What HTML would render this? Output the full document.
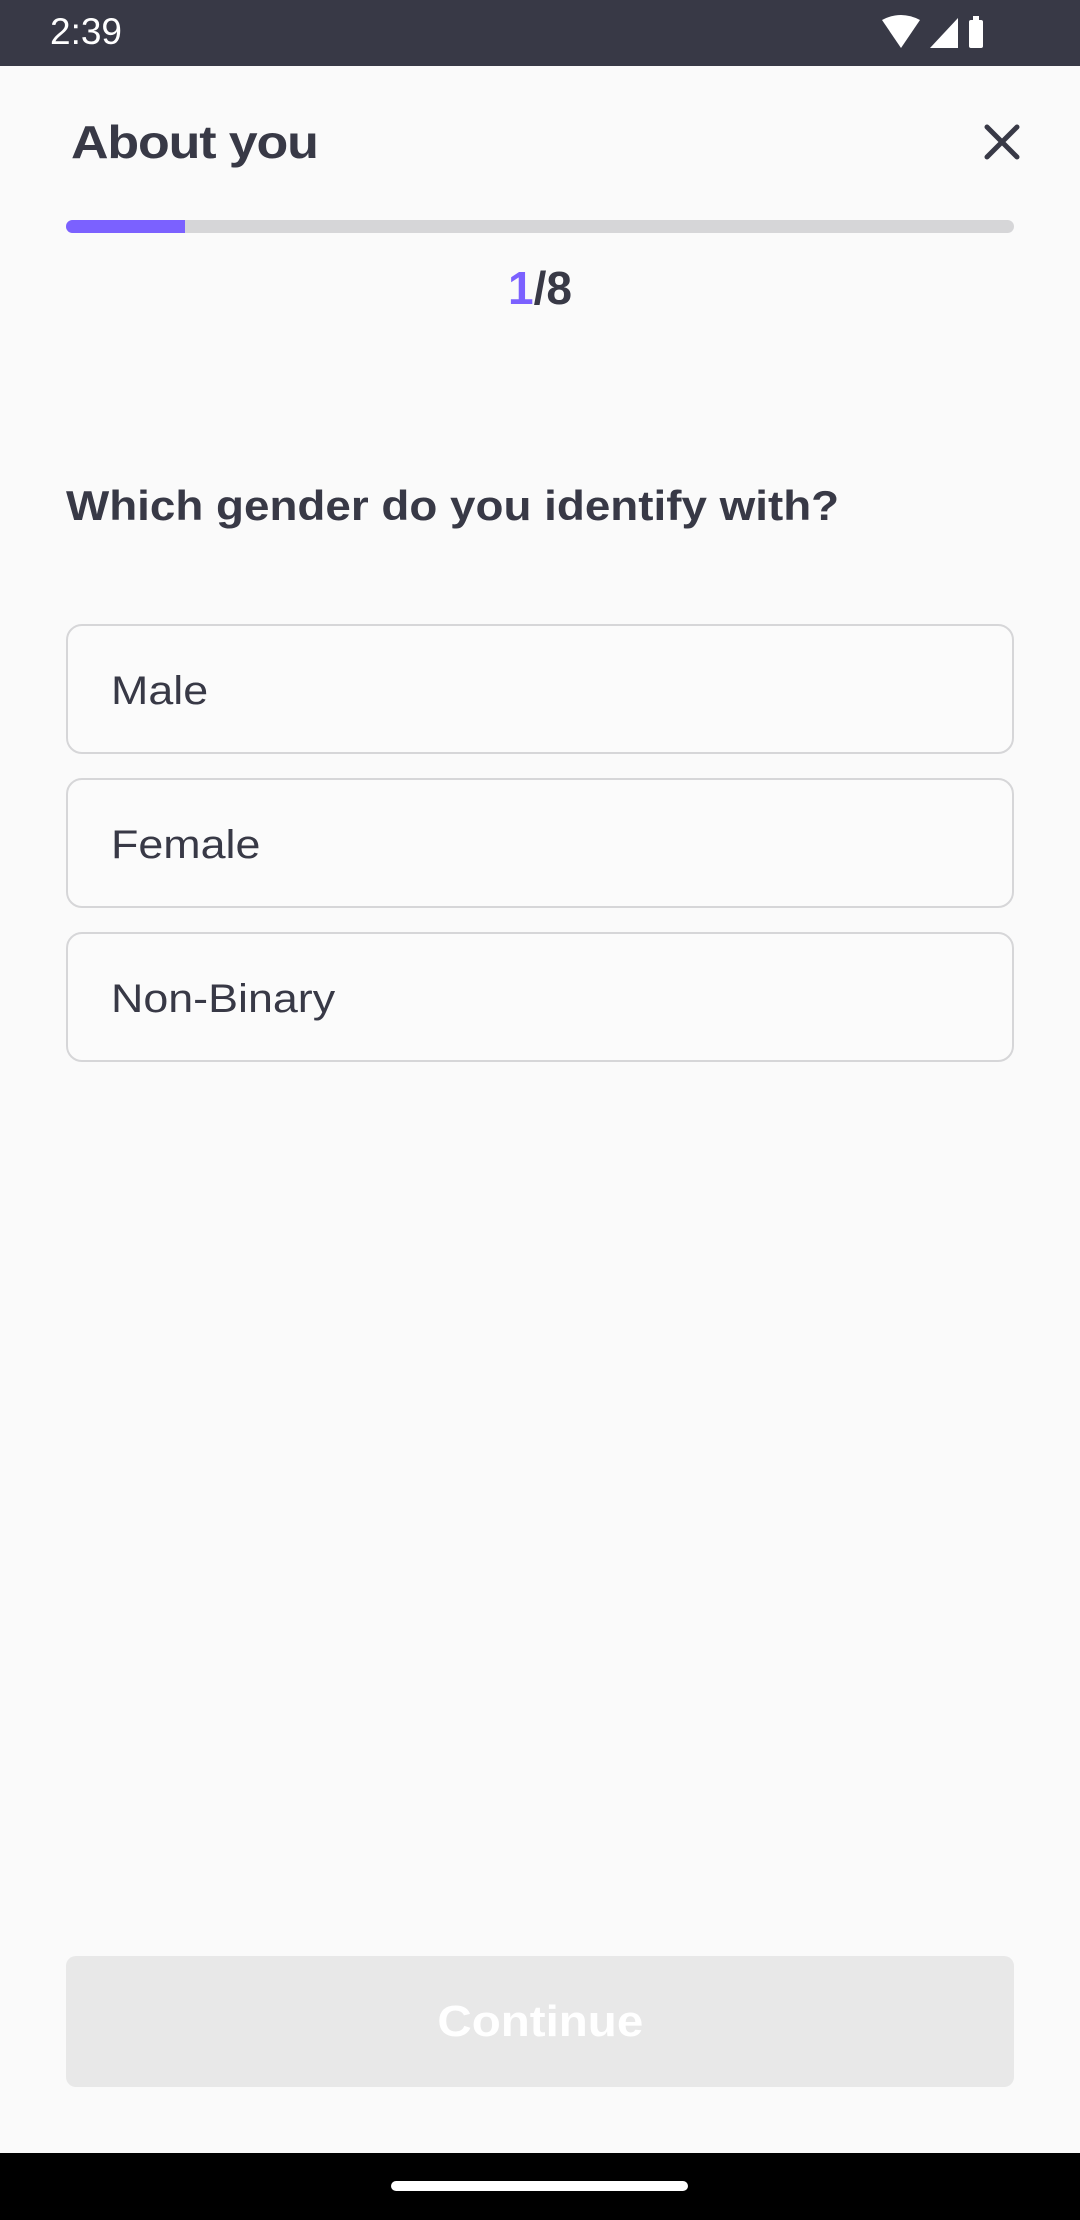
<!DOCTYPE html>
<html><head><meta charset="utf-8"><style>
body{margin:0;width:1080px;height:2220px;background:#fafafa;position:relative;overflow:hidden;font-family:"Liberation Sans",sans-serif;color:#383946}
.sb{position:absolute;left:0;top:0;width:1080px;height:66px;background:#383946}
.abs{position:absolute}
.sx{display:inline-block;transform-origin:left center}
.opt{position:absolute;left:66px;width:948px;height:130px;border:2px solid #d6d6d8;border-radius:16px;background:#fbfbfb;box-sizing:border-box}
.opt span{position:absolute;left:43px;top:4px;line-height:123px;font-size:40px;color:#383946;transform:scaleX(1.12);transform-origin:left center}
</style></head><body>
<div class="sb"></div>
<div class="abs" style="left:50px;top:11px;font-size:37px;color:#fff;line-height:42px">2:39</div>
<svg class="abs" style="left:880px;top:14px" width="130" height="38" viewBox="0 0 130 38">
<path d="M2 6 Q21 -4 40 6 L21 34 Z" fill="#fff"/>
<path d="M50 34 L78 4 L78 34 Z" fill="#fff"/>
<rect x="89" y="6" width="14" height="28" rx="2" fill="#fff"/><rect x="93" y="2" width="6" height="5" fill="#fff"/>
</svg>
<div class="abs" style="left:71px;top:113px;font-size:46px;font-weight:bold;line-height:58px;letter-spacing:-1px"><span class="sx" style="transform:scaleX(1.13)">About you</span></div>
<svg class="abs" style="left:984px;top:124px" width="36" height="36" viewBox="0 0 36 36"><path d="M3 3L33 33M33 3L3 33" stroke="#383946" stroke-width="5" stroke-linecap="round"/></svg>
<div class="abs" style="left:66px;top:220px;width:948px;height:13px;border-radius:7px;background:#d6d6d8;overflow:hidden"><div style="width:119px;height:13px;background:#7b61ff"></div></div>
<div class="abs" style="left:0;width:1080px;top:262px;text-align:center;font-size:46px;line-height:52px;font-weight:600"><span style="color:#7b61ff">1</span>/8</div>
<div class="abs" style="left:66px;top:478px;font-size:42px;font-weight:bold;line-height:56px"><span class="sx" style="transform:scaleX(1.09)">Which gender do you identify with?</span></div>
<div class="opt" style="top:624px"><span>Male</span></div>
<div class="opt" style="top:778px"><span>Female</span></div>
<div class="opt" style="top:932px"><span>Non-Binary</span></div>
<div class="abs" style="left:66px;top:1956px;width:948px;height:131px;border-radius:10px;background:#e8e8e8;color:#fff;font-size:44px;font-weight:bold;text-align:center;line-height:131px"><span style="display:inline-block;transform:scaleX(1.08)">Continue</span></div>
<div class="abs" style="left:0;top:2153px;width:1080px;height:67px;background:#000"></div>
<div class="abs" style="left:391px;top:2181px;width:297px;height:10px;border-radius:5px;background:#fff"></div>
</body></html>
